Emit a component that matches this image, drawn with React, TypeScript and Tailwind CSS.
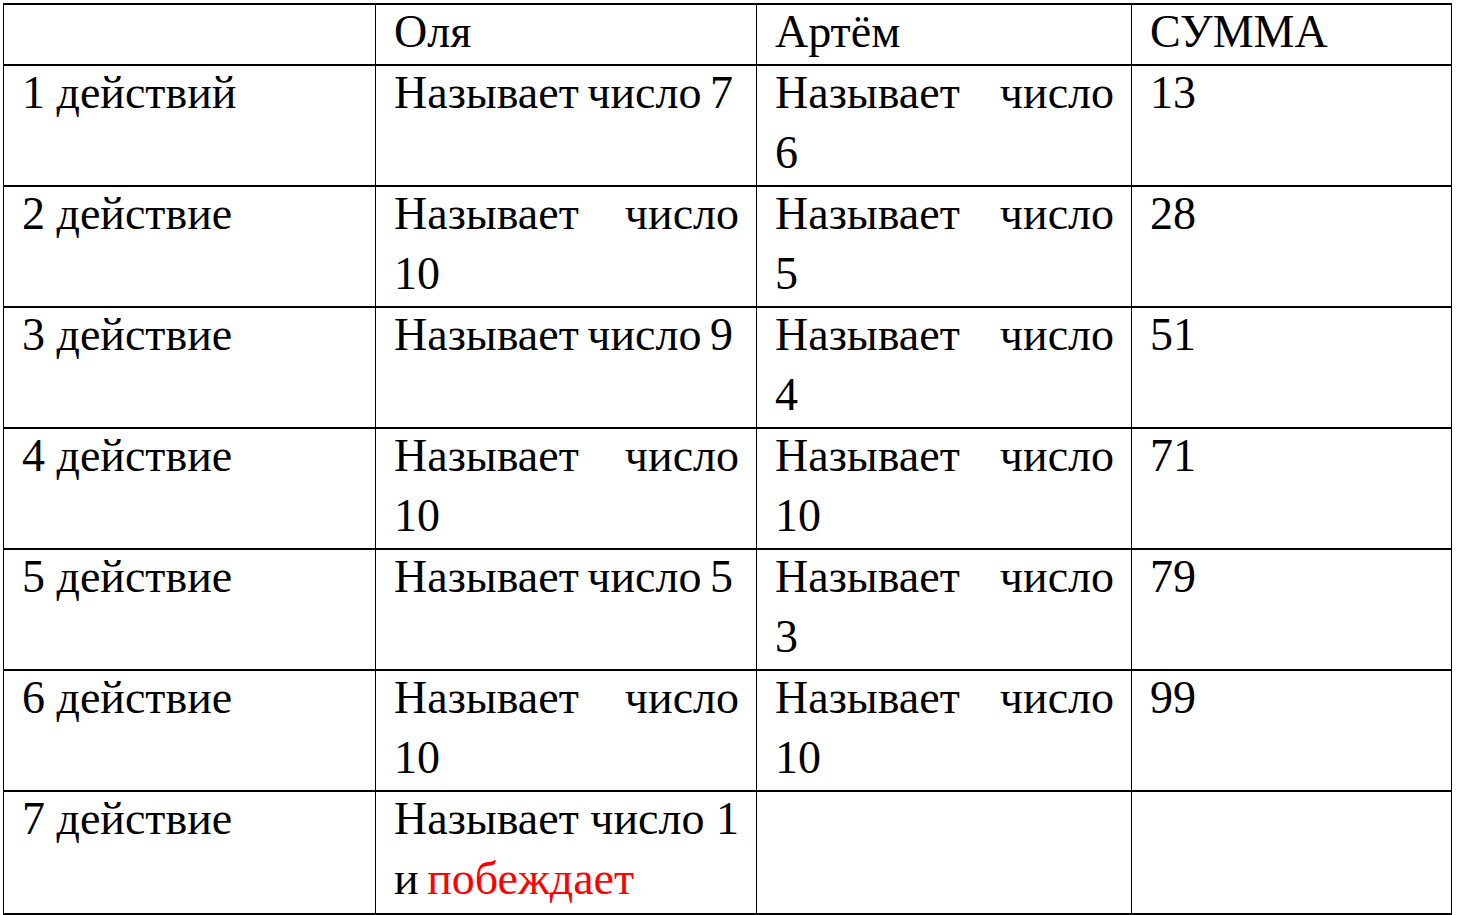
const rows: [string, React.ReactNode, string, string][] = [
  ['1 действий', 'Называет число 7', 'Называет число 6', '13'],
  ['2 действие', 'Называет число 10', 'Называет число 5', '28'],
  ['3 действие', 'Называет число 9', 'Называет число 4', '51'],
  ['4 действие', 'Называет число 10', 'Называет число 10', '71'],
  ['5 действие', 'Называет число 5', 'Называет число 3', '79'],
  ['6 действие', 'Называет число 10', 'Называет число 10', '99'],
  [
    '7 действие',
    <>
      Называет число 1 и <span className="text-[#ff0000]">побеждает</span>
    </>,
    '',
    '',
  ],
]

function Cell({
  children,
  w,
  last,
  tight,
}: {
  children?: React.ReactNode
  w: string
  last?: boolean
  tight?: boolean
}) {
  return (
    <div
      className={`${w} shrink-0 pl-[18px] pr-[17px] text-justify ${last ? '' : 'border-r border-black'} ${tight ? '[word-spacing:-3px]' : ''}`}
    >
      <div className="-mt-[3px]">{children}</div>
    </div>
  )
}

export default function App() {
  return (
    <div className="min-h-[915px] bg-white pt-[3px] pl-[3px] text-black font-[family-name:'Liberation_Serif','Times_New_Roman',serif] text-[46px] leading-[60px]">
      <div className="w-[1449px] border-t-2 border-l border-r border-b-2 border-black">
        <div className="flex h-[61px] border-b-2 border-black">
          <Cell w="w-[372px]" />
          <Cell w="w-[381px]">Оля</Cell>
          <Cell w="w-[375px]">Артём</Cell>
          <Cell w="flex-1" last>СУММА</Cell>
        </div>
        {rows.map((r, i) => (
          <div
            key={i}
            className={`flex h-[121px] ${i < rows.length - 1 ? 'border-b-2 border-black' : ''}`}
          >
            <Cell w="w-[372px]">{r[0]}</Cell>
            <Cell w="w-[381px]" tight>{r[1]}</Cell>
            <Cell w="w-[375px]">{r[2]}</Cell>
            <Cell w="flex-1" last>{r[3]}</Cell>
          </div>
        ))}
      </div>
    </div>
  )
}
